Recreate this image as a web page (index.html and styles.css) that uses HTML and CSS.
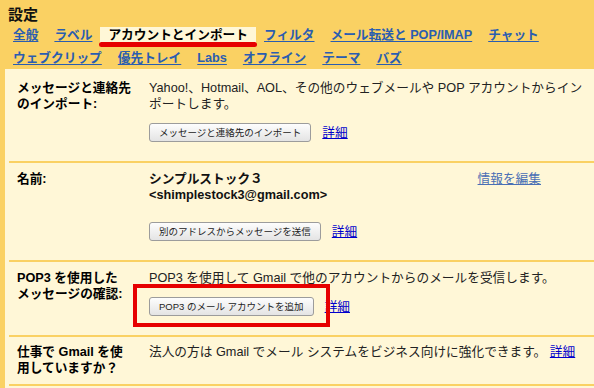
FILE: index.html
```html
<!DOCTYPE html>
<html lang="ja">
<head>
<meta charset="utf-8">
<title>設定</title>
<link rel="stylesheet" href="styles.css">
</head>
<body>
<div class="page">
  <h1 class="title">設定</h1>
  <nav class="tabs">
    <a class="tab" href="#">全般</a>
    <a class="tab" href="#">ラベル</a>
    <span class="tab active">アカウントとインポート</span>
    <a class="tab" href="#">フィルタ</a>
    <a class="tab" href="#">メール転送と POP/IMAP</a>
    <a class="tab" href="#">チャット</a>
    <a class="tab" href="#">ウェブクリップ</a>
    <a class="tab" href="#">優先トレイ</a>
    <a class="tab" href="#">Labs</a>
    <a class="tab" href="#">オフライン</a>
    <a class="tab" href="#">テーマ</a>
    <a class="tab" href="#">バズ</a>
  </nav>
  <div class="panel">
    <section class="row row-first">
      <div class="label">メッセージと連絡先<br>のインポート:</div>
      <div class="value">
        <div class="desc">Yahoo!、Hotmail、AOL、その他のウェブメールや POP アカウントからインポートします。</div>
        <div class="actions">
          <button class="btn" type="button">メッセージと連絡先のインポート</button>
          <a class="more" href="#">詳細</a>
        </div>
      </div>
    </section>
    <section class="row">
      <div class="label">名前:</div>
      <div class="value">
        <div class="name-line">
          <div class="name">シンプルストック３<br>&lt;shimplestock3@gmail.com&gt;</div>
          <a class="edit" href="#">情報を編集</a>
        </div>
        <div class="actions actions-far">
          <button class="btn" type="button">別のアドレスからメッセージを送信</button>
          <a class="more" href="#">詳細</a>
        </div>
      </div>
    </section>
    <section class="row row-pop">
      <div class="label">POP3 を使用した<br>メッセージの確認:</div>
      <div class="value">
        <div class="desc">POP3 を使用して Gmail で他のアカウントからのメールを受信します。</div>
        <div class="actions">
          <button class="btn" type="button">POP3 のメール アカウントを追加</button>
          <a class="more" href="#">詳細</a>
        </div>
      </div>
      <div class="highlight"></div>
    </section>
    <section class="row row-last">
      <div class="label">仕事で Gmail を使<br>用していますか？</div>
      <div class="value">
        <div class="desc">法人の方は Gmail でメール システムをビジネス向けに強化できます。 <a class="more" href="#">詳細</a></div>
      </div>
    </section>
  </div>
</div>
</body>
</html>
```

FILE: styles.css
```css
html, body {
  margin: 0;
  padding: 0;
}

body {
  background: #fad163;
  font-family: "Liberation Sans", "Noto Sans CJK JP", sans-serif;
  font-size: 12.7px;
  line-height: 16px;
  color: #222;
  height: 100vh;
  overflow: hidden;
}

.page {
  padding-top: 6px;
}

.title {
  margin: 0 0 3px 8px;
  font-size: 15px;
  line-height: 18px;
  font-weight: bold;
  color: #111;
}

.tabs {
  display: flex;
  flex-wrap: wrap;
  row-gap: 7px;
  margin-left: 5px;
}

.tab {
  display: block;
  padding: 0 8px;
  height: 16px;
  line-height: 16px;
  font-weight: bold;
  color: #2a5db0;
  text-decoration: underline;
  text-underline-offset: 2px;
  white-space: nowrap;
}

.tab.active {
  position: relative;
  color: #000;
  text-decoration: none;
  background: #fff7d7;
}

.tab.active::after {
  content: "";
  position: absolute;
  left: -1px;
  right: -1px;
  bottom: -4px;
  height: 5px;
  border-radius: 3px;
  background: #e60000;
}

.panel {
  margin: 3px 0 0 5px;
  padding-top: 3px;
  background: #fff7d7;
  height: calc(100vh - 72px);
  overflow: hidden;
}

.row {
  position: relative;
  display: grid;
  grid-template-columns: 132px 1fr;
  margin-left: 4px;
  padding: 8px 0 19px 8px;
  border-bottom: 2px solid #fad163;
}

.row-last {
  padding-bottom: 8px;
  padding-top: 7px;
}

.label {
  font-weight: bold;
  color: #000;
  white-space: nowrap;
}

.value {
  width: 436px;
}

.desc {
  color: #222;
}

.actions {
  display: flex;
  align-items: center;
  gap: 11px;
  margin-top: 11px;
}

.actions-far {
  margin-top: 19px;
}

.btn {
  height: 19px;
  padding: 0 9px;
  border: 1px solid #9c9c9c;
  border-radius: 3px;
  background: linear-gradient(#fdfdfd, #e4e4e4);
  color: #222;
  font-family: "Liberation Sans", "Noto Sans CJK JP", sans-serif;
  font-size: 9.5px;
  line-height: 17px;
  white-space: nowrap;
}

.more {
  color: #0000cc;
  text-decoration: underline;
}

.name-line {
  display: flex;
  justify-content: space-between;
  width: 392px;
}

.name {
  font-weight: bold;
  color: #111;
}

.edit {
  color: #4a6fb5;
  text-decoration: underline;
}

.highlight {
  position: absolute;
  left: 124px;
  top: 22px;
  width: 189px;
  height: 35px;
  border: 4px solid #e60000;
}
```
